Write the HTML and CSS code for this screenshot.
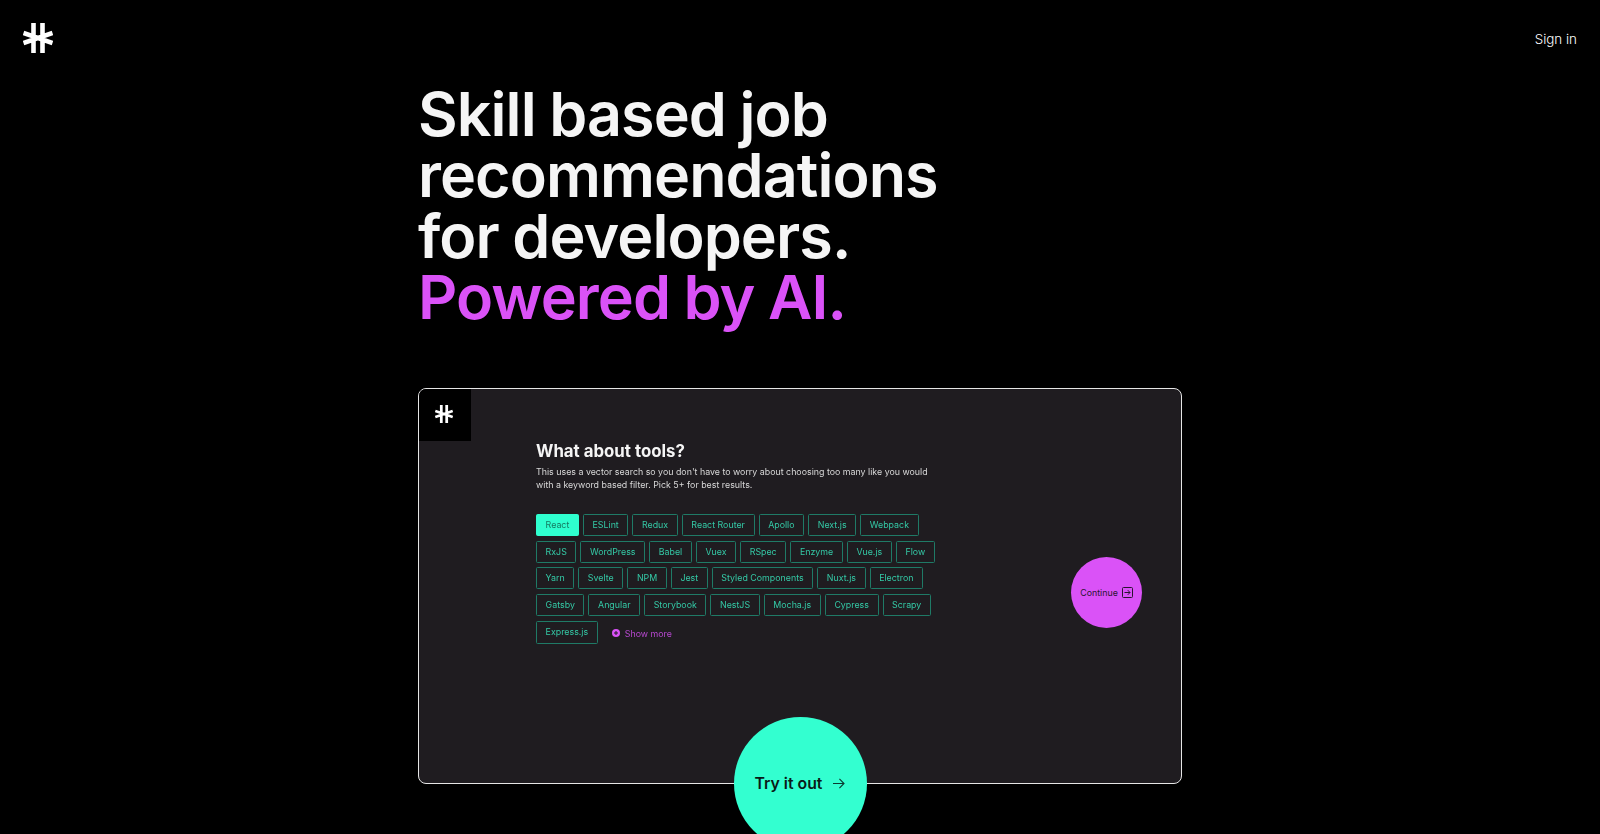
FILE: index.html
```html
<!DOCTYPE html>
<html lang="en">
<head>
    <meta charset="UTF-8">
    <meta name="viewport" content="width=device-width, initial-scale=1.0">
    <title>Skill based job recommendations</title>
    <link rel="stylesheet" href="styles.css">
</head>
<body>

<header class="topbar">
    <a class="logo" href="#">
        <svg viewBox="0 0 30 30" width="30" height="30"><path d="M10.5 0V30M19.5 0V30M0.5 10L29.5 20M0.5 20L29.5 10" fill="none" stroke="#fff" stroke-width="4.6"/></svg>
    </a>
    <a class="signin" href="#">Sign in</a>
</header>

<main class="hero">
    <h1 class="headline">Skill based job<br>recommendations<br>for developers.<br><span class="accent">Powered by AI.</span></h1>

    <section class="demo">
        <div class="demo-logo">
            <svg viewBox="0 0 30 30" width="18" height="18"><path d="M10.5 0V30M19.5 0V30M0.5 10L29.5 20M0.5 20L29.5 10" fill="none" stroke="#fff" stroke-width="4.6"/></svg>
        </div>
        <div class="demo-body">
            <h2>What about tools?</h2>
            <p>This uses a vector search so you don't have to worry about choosing too many like you would<br>with a keyword based filter. Pick 5+ for best results.</p>
            <ul class="tags">
                <li class="tag tag-on">React</li>
                <li class="tag">ESLint</li>
                <li class="tag">Redux</li>
                <li class="tag">React Router</li>
                <li class="tag">Apollo</li>
                <li class="tag">Next.js</li>
                <li class="tag">Webpack</li>
                <li class="tag">RxJS</li>
                <li class="tag">WordPress</li>
                <li class="tag">Babel</li>
                <li class="tag">Vuex</li>
                <li class="tag">RSpec</li>
                <li class="tag">Enzyme</li>
                <li class="tag">Vue.js</li>
                <li class="tag">Flow</li>
                <li class="tag">Yarn</li>
                <li class="tag">Svelte</li>
                <li class="tag">NPM</li>
                <li class="tag">Jest</li>
                <li class="tag">Styled Components</li>
                <li class="tag">Nuxt.js</li>
                <li class="tag">Electron</li>
                <li class="tag">Gatsby</li>
                <li class="tag">Angular</li>
                <li class="tag">Storybook</li>
                <li class="tag">NestJS</li>
                <li class="tag">Mocha.js</li>
                <li class="tag">Cypress</li>
                <li class="tag">Scrapy</li>
                <li class="tag tag-last">Express.js</li>
                <li class="more">
                    <svg viewBox="0 0 8 8" width="8" height="8"><circle cx="4" cy="4" r="4" fill="#da52f7"/><path d="M2 4H6M4 2V6" stroke="#1f1c20" stroke-width="1"/></svg>
                    Show more
                </li>
            </ul>
        </div>
        <div class="continue">
            Continue
            <svg viewBox="0 0 11 11" width="11" height="11"><rect x="0.5" y="0.5" width="10" height="10" rx="1" fill="none" stroke="#2a1430"/><path d="M2.5 5.5H8M5.8 3.2L8 5.5L5.8 7.8" fill="none" stroke="#2a1430"/></svg>
        </div>
        <a class="try" href="#">
            Try it out
            <svg viewBox="0 0 14 12" width="13" height="11"><path d="M1 6H13M8 1L13 6L8 11" fill="none" stroke="#0b3a30" stroke-width="1.2"/></svg>
        </a>
    </section>
</main>

</body>
</html>
```

FILE: styles.css
```css
html, body {
    height: 100%;
    overflow: hidden;
}

body {
    margin: 0;
    background-color: #000;
    color: #fff;
    font-family: Inter, 'Noto Sans', sans-serif;
}

a {
    color: inherit;
    text-decoration: none;
}

.topbar {
    display: flex;
    align-items: center;
    justify-content: space-between;
    padding: 23px 23px 0;
    height: 30px;
}

.logo {
    display: flex;
}

.signin {
    padding-top: 1px;
    font-size: 13.4px;
    font-weight: 300;
}

.hero {
    width: 764px;
    margin: 0 auto;
}

.headline {
    margin: 31px 0 60px;
    font-size: 61px;
    font-weight: 600;
    line-height: 61px;
    letter-spacing: -0.015em;
    word-spacing: -1px;
    color: #f5f5f5;
}

.accent {
    color: #da52f7;
}

.demo {
    position: relative;
    box-sizing: border-box;
    height: 396px;
    border: 1px solid #e6e6e6;
    border-radius: 8px;
    background-color: #1f1c20;
}

.demo-logo {
    display: flex;
    align-items: center;
    justify-content: center;
    width: 52px;
    height: 52px;
    padding-right: 2px;
    padding-bottom: 2px;
    box-sizing: border-box;
    background-color: #000;
    border-top-left-radius: 7px;
}

.demo-body {
    padding-left: 117px;
    filter: blur(0.4px);
}

.demo-body h2 {
    margin: 0;
    font-size: 16.8px;
    font-weight: 700;
    line-height: 20px;
    color: #f5f5f5;
}

.demo-body p {
    margin: 4px 0 0;
    font-size: 8.85px;
    line-height: 13.4px;
    color: #d8d8d8;
}

.tags {
    display: flex;
    flex-wrap: wrap;
    align-items: center;
    gap: 4.7px 4px;
    width: 402px;
    margin: 22px 0 0;
    padding: 0;
    list-style: none;
}

.tag {
    box-sizing: border-box;
    height: 22px;
    padding: 0 8.6px;
    border: 1px solid #1f7a66;
    border-radius: 1.5px;
    font-size: 8.85px;
    line-height: 20.5px;
    color: #34c9a6;
}

.tag-on {
    background-color: #2fffcf;
    border-color: #2fffcf;
    color: #15795f;
}

.tag-last {
    height: 23px;
}

.more {
    display: flex;
    align-items: center;
    gap: 5px;
    margin: 2px 0 0 10px;
    font-size: 8.85px;
    color: #b648cf;
}

.continue {
    position: absolute;
    top: 168px;
    right: 39px;
    display: flex;
    align-items: center;
    justify-content: center;
    gap: 4px;
    width: 71px;
    height: 71px;
    border-radius: 50%;
    background-color: #da52f7;
    font-size: 8.85px;
    color: #2a1430;
}

.try {
    position: absolute;
    left: 50%;
    bottom: -67px;
    display: flex;
    align-items: center;
    justify-content: center;
    gap: 10px;
    width: 133px;
    height: 133px;
    margin-left: -66.5px;
    border-radius: 50%;
    background-color: #33ffd0;
    font-size: 15.8px;
    font-weight: 600;
    color: #0a1a17;
}
```
